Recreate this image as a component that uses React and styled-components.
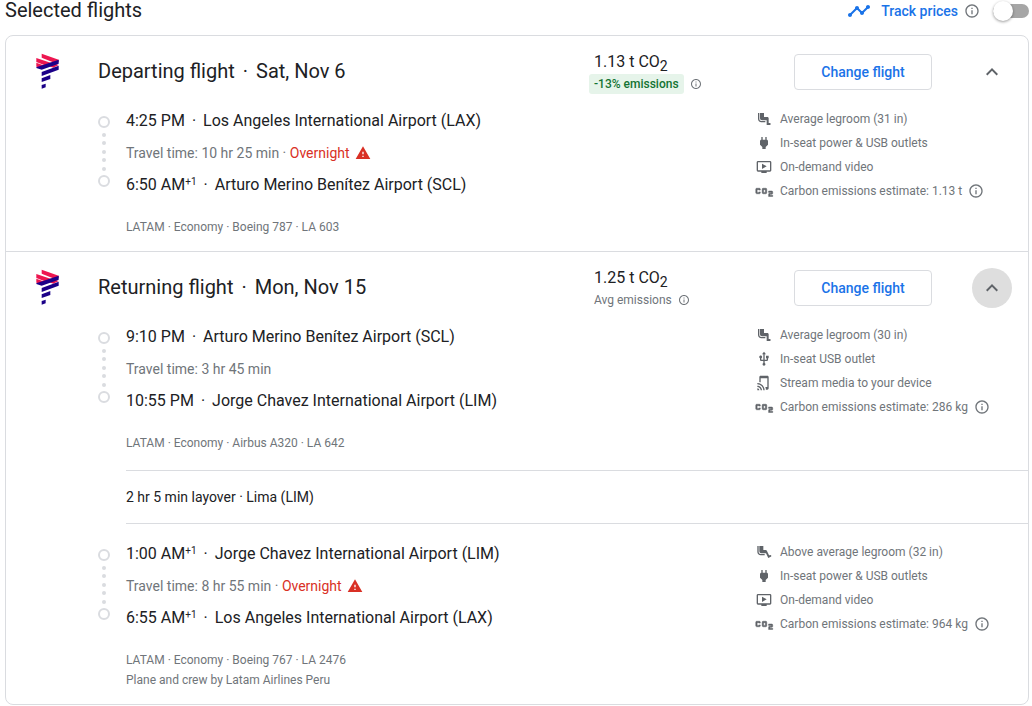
import React, { useState } from "react";
import styled, { createGlobalStyle } from "styled-components";
import {
  MdAirlineSeatLegroomExtra,
  MdAirlineSeatLegroomNormal,
  MdCo2,
  MdExpandLess,
  MdInfoOutline,
  MdOndemandVideo,
  MdPower,
  MdTapAndPlay,
  MdTimeline,
  MdUsb,
  MdWarning,
} from "react-icons/md";

const GlobalStyle = createGlobalStyle`
  * {
    box-sizing: border-box;
  }

  body {
    margin: 0;
    background-color: #fff;
    color: #202124;
    font-family: Roboto, "Liberation Sans", sans-serif;
    font-size: 14px;
  }

  button {
    font-family: inherit;
  }
`;

const Page = styled.main`
  padding: 0 3px 0 5px;
`;

const TopBar = styled.header`
  display: flex;
  align-items: flex-start;
  justify-content: space-between;
  height: 35px;
`;

const PageTitle = styled.h1`
  margin: 0;
  font-size: 20px;
  font-weight: 400;
  line-height: 20px;
`;

const TrackArea = styled.div`
  display: flex;
  align-items: center;
  height: 22px;
  color: #1a73e8;
`;

const TrackLabel = styled.label`
  display: flex;
  align-items: center;
  gap: 10px;
  font-weight: 500;
`;

const InfoButton = styled.button`
  display: flex;
  padding: 0;
  margin-left: 6px;
  border: none;
  background: none;
  color: #70757a;
  cursor: pointer;
`;

const Switch = styled.input`
  appearance: none;
  width: 36px;
  height: 14px;
  margin: 0 0 0 13px;
  border-radius: 7px;
  background-color: ${({ checked }) => (checked ? "#8ab4f8" : "#a6a6a6")};
  cursor: pointer;

  &::before {
    content: "";
    display: block;
    width: 20px;
    height: 20px;
    margin-top: -3px;
    margin-left: ${({ checked }) => (checked ? "16px" : "0")};
    border-radius: 50%;
    background-color: #fff;
    box-shadow: 0 1px 3px rgba(0, 0, 0, 0.4);
  }
`;

const Card = styled.div`
  border: 1px solid #dadce0;
  border-radius: 8px;
`;

const Flight = styled.section`
  padding-top: 16px;

  & + & {
    border-top: 1px solid #dadce0;
  }
`;

const FlightHeader = styled.div`
  display: grid;
  grid-template-columns: 92px 1fr 200px 138px 80px;
  grid-template-rows: 40px;
  align-items: center;
  padding-right: 16px;
`;

const LogoBox = styled.div`
  display: flex;
  padding: 0 0 2px 30px;
`;

const FlightTitle = styled.h2`
  margin: 0;
  padding-bottom: 2px;
  font-size: 20px;
  font-weight: 400;
  line-height: 24px;
`;

const TitleDot = styled.span`
  margin: 0 8px;
`;

const PlaceDot = styled.span`
  margin: 0 7px;
`;

const Total = styled.div`
  font-size: 16px;
  line-height: 24px;

  sub {
    font-size: 14px;
    line-height: 0;
  }
`;

const Compare = styled.div`
  display: flex;
  align-items: center;
  height: 20px;
  color: #70757a;
  font-size: 12px;
`;

const Badge = styled.span`
  margin-left: -5px;
  padding: 0 5px;
  border-radius: 3px;
  background-color: #e6f4ea;
  color: #137333;
  font-weight: 500;
  line-height: 20px;
`;

const ChangeButton = styled.button`
  height: 36px;
  border: 1px solid #dadce0;
  border-radius: 4px;
  background-color: #fff;
  color: #1a73e8;
  font-size: 14px;
  font-weight: 500;
  cursor: pointer;
`;

const CollapseButton = styled.button`
  display: flex;
  align-items: center;
  justify-content: center;
  justify-self: end;
  width: 40px;
  height: 40px;
  padding: 0;
  border: none;
  border-radius: 50%;
  background-color: ${({ $active }) => ($active ? "#dedede" : "transparent")};
  color: #5f6368;
  cursor: pointer;
`;

const LegRow = styled.div`
  display: grid;
  grid-template-columns: 28px 1fr 272px;
  padding: 16px 0 15px 92px;
`;

const Timeline = styled.div`
  display: flex;
  flex-direction: column;
  align-items: center;
  justify-content: space-between;
  width: 12px;
  height: 71px;
  margin-top: 8px;
`;

const Stop = styled.span`
  width: 12px;
  height: 12px;
  border: 2px solid #dadce0;
  border-radius: 50%;
`;

const TimelineDot = styled.span`
  width: 4px;
  height: 4px;
  border-radius: 50%;
  background-color: #dadce0;
`;

const Place = styled.div`
  font-size: 16px;
  line-height: 26px;
  height: 24px;

  sup {
    font-size: 10px;
    line-height: 0;
    vertical-align: 5px;
  }
`;

const TravelTime = styled.div`
  display: flex;
  align-items: center;
  height: 40px;
  padding-top: 2px;
  color: #70757a;
  white-space: pre;
`;

const Overnight = styled.span`
  display: flex;
  align-items: center;
  gap: 5px;
  color: #d93025;
`;

const Details = styled.div`
  margin-top: 21px;
  color: #70757a;
  font-size: 12px;
  line-height: 20px;
  height: ${({ $lines }) => $lines * 20 - 1}px;
`;

const Amenities = styled.ul`
  margin: -1px 0 0;
  padding: 0;
  list-style: none;
`;

const Amenity = styled.li`
  display: flex;
  align-items: center;
  height: 24px;
  color: #70757a;
  font-size: 12px;
`;

const AmenityIcon = styled.span`
  display: flex;
  justify-content: center;
  width: 16px;
  margin-right: 8px;
  color: #5f6368;

  svg {
    flex-shrink: 0;
  }
`;

const Co2Icon = styled(MdCo2)`
  width: 22px;
  height: 22px;

  path:not([fill="none"]) {
    stroke: currentColor;
    stroke-width: 0.5px;
  }

  path[fill="none"] {
    stroke: none;
  }
`;

const Layover = styled.div`
  margin: 3px 0 1px 120px;
  border-top: 1px solid #dadce0;
  border-bottom: 1px solid #dadce0;
  line-height: 52px;
`;

const icons = {
  legroom: MdAirlineSeatLegroomNormal,
  legroomExtra: MdAirlineSeatLegroomExtra,
  power: MdPower,
  usb: MdUsb,
  video: MdOndemandVideo,
  stream: MdTapAndPlay,
  co2: Co2Icon,
};

const flights = [
  {
    title: "Departing flight",
    date: "Sat, Nov 6",
    total: "1.13 t",
    compare: "-13% emissions",
    lower: true,
    legs: [
      {
        from: ["4:25 PM", "", "Los Angeles International Airport (LAX)"],
        to: ["6:50 AM", "+1", "Arturo Merino Benítez Airport (SCL)"],
        time: "10 hr 25 min",
        overnight: true,
        details: ["LATAM · Economy · Boeing 787 · LA 603"],
        amenities: [
          ["legroom", "Average legroom (31 in)"],
          ["power", "In-seat power & USB outlets"],
          ["video", "On-demand video"],
          ["co2", "Carbon emissions estimate: 1.13 t"],
        ],
      },
    ],
  },
  {
    title: "Returning flight",
    date: "Mon, Nov 15",
    total: "1.25 t",
    compare: "Avg emissions",
    active: true,
    legs: [
      {
        from: ["9:10 PM", "", "Arturo Merino Benítez Airport (SCL)"],
        to: ["10:55 PM", "", "Jorge Chavez International Airport (LIM)"],
        time: "3 hr 45 min",
        details: ["LATAM · Economy · Airbus A320 · LA 642"],
        amenities: [
          ["legroom", "Average legroom (30 in)"],
          ["usb", "In-seat USB outlet"],
          ["stream", "Stream media to your device"],
          ["co2", "Carbon emissions estimate: 286 kg"],
        ],
        layover: "2 hr 5 min layover · Lima (LIM)",
      },
      {
        from: ["1:00 AM", "+1", "Jorge Chavez International Airport (LIM)"],
        to: ["6:55 AM", "+1", "Los Angeles International Airport (LAX)"],
        time: "8 hr 55 min",
        overnight: true,
        details: [
          "LATAM · Economy · Boeing 767 · LA 2476",
          "Plane and crew by Latam Airlines Peru",
        ],
        amenities: [
          ["legroomExtra", "Above average legroom (32 in)"],
          ["power", "In-seat power & USB outlets"],
          ["video", "On-demand video"],
          ["co2", "Carbon emissions estimate: 964 kg"],
        ],
      },
    ],
  },
];

const LatamLogo = () => (
  <svg width="24" height="36" viewBox="108 160 72 108" aria-label="LATAM">
    <g fill="#ed1650">
      <path d="M125 162 L176 180 V187 L163 189 L125 174 Z" />
      <path d="M109 175 L154 190 L138 198 L109 187 Z" />
      <path d="M109 189 L134 198 L122 204 L109 201 Z" />
      <path d="M160 190 L176 196 L160 204 L148 200 Z" />
    </g>
    <g fill="#1b0088">
      <path d="M176 180 V192 L125 210 L109 205 V203 Z" />
      <path d="M176 198 V210 L125 229 V217 Z" />
      <path d="M151 226 V238 L125 247 V236 Z" />
      <path d="M137 252 V263 L125 267 V256 Z" />
    </g>
  </svg>
);

const Info = ({ size }) => (
  <InfoButton type="button" aria-label="More information">
    <MdInfoOutline size={size} />
  </InfoButton>
);

const PlaceLine = ({ place }) => {
  const [time, offset, airport] = place;

  return (
    <Place>
      {time}
      {offset && <sup>{offset}</sup>}
      <PlaceDot>·</PlaceDot>
      {airport}
    </Place>
  );
};

const Leg = ({ leg }) => (
  <>
    <LegRow>
      <Timeline>
        <Stop />
        {[1, 2, 3, 4, 5].map((dot) => (
          <TimelineDot key={dot} />
        ))}
        <Stop />
      </Timeline>
      <div>
        <PlaceLine place={leg.from} />
        <TravelTime>
          Travel time: {leg.time}
          {leg.overnight && " · "}
          {leg.overnight && (
            <Overnight>
              Overnight
              <MdWarning size={16} />
            </Overnight>
          )}
        </TravelTime>
        <PlaceLine place={leg.to} />
        <Details $lines={leg.details.length}>
          {leg.details.map((line) => (
            <div key={line}>{line}</div>
          ))}
        </Details>
      </div>
      <Amenities>
        {leg.amenities.map(([icon, text]) => {
          const Icon = icons[icon];

          return (
            <Amenity key={text}>
              <AmenityIcon>
                <Icon size={16} />
              </AmenityIcon>
              {text}
              {icon === "co2" && <Info size={16} />}
            </Amenity>
          );
        })}
      </Amenities>
    </LegRow>
    {leg.layover && <Layover>{leg.layover}</Layover>}
  </>
);

const App = () => {
  const [tracking, setTracking] = useState(false);

  return (
    <Page>
      <GlobalStyle />
      <TopBar>
        <PageTitle>Selected flights</PageTitle>
        <TrackArea>
          <TrackLabel htmlFor="track">
            <MdTimeline size={24} />
            Track prices
          </TrackLabel>
          <Info size={16} />
          <Switch
            id="track"
            type="checkbox"
            role="switch"
            checked={tracking}
            onChange={(e) => setTracking(e.target.checked)}
          />
        </TrackArea>
      </TopBar>
      <Card>
        {flights.map((flight) => (
          <Flight key={flight.title}>
            <FlightHeader>
              <LogoBox>
                <LatamLogo />
              </LogoBox>
              <FlightTitle>
                {flight.title}
                <TitleDot>·</TitleDot>
                {flight.date}
              </FlightTitle>
              <div>
                <Total>
                  {flight.total} CO<sub>2</sub>
                </Total>
                <Compare>
                  {flight.lower ? (
                    <Badge>{flight.compare}</Badge>
                  ) : (
                    flight.compare
                  )}
                  <Info size={12} />
                </Compare>
              </div>
              <ChangeButton type="button">Change flight</ChangeButton>
              <CollapseButton
                type="button"
                aria-label="Collapse"
                $active={flight.active}
              >
                <MdExpandLess size={24} />
              </CollapseButton>
            </FlightHeader>
            {flight.legs.map((leg) => (
              <Leg key={leg.from[0]} leg={leg} />
            ))}
          </Flight>
        ))}
      </Card>
    </Page>
  );
};

export default App;
